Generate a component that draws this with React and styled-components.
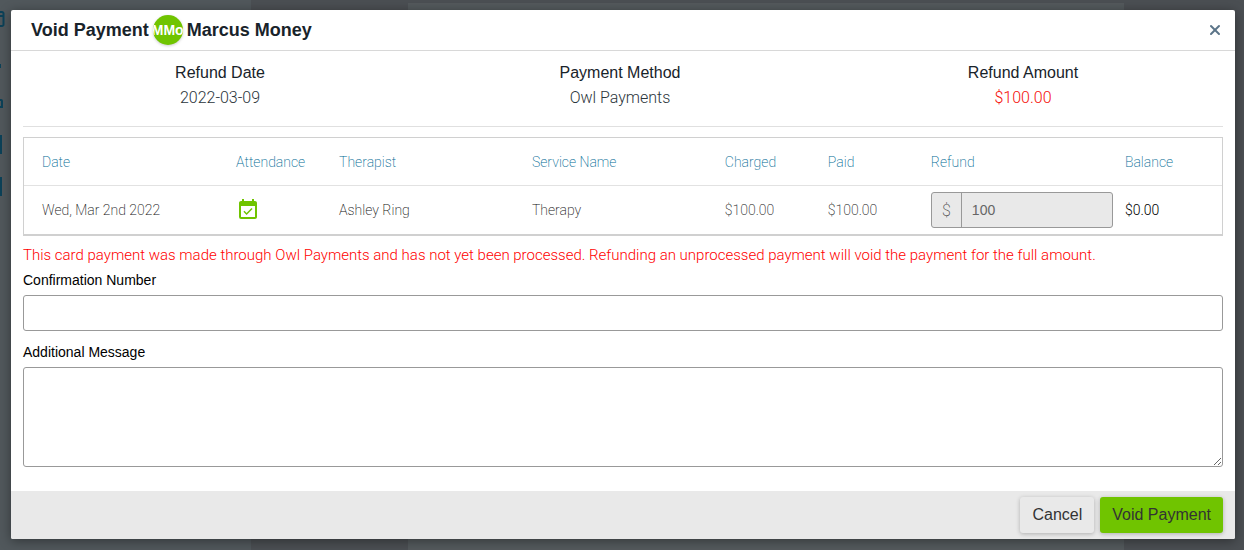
import React from "react";
import styled, { createGlobalStyle } from "styled-components";
import { MdEventAvailable } from "react-icons/md";
import { X } from "lucide-react";

const columns = ["Date", "Attendance", "Therapist", "Service Name", "Charged", "Paid", "Refund", "Balance"];

const sessions = [
	{
		date: "Wed, Mar 2nd 2022",
		therapist: "Ashley Ring",
		service: "Therapy",
		charged: "$100.00",
		paid: "$100.00",
		refund: "100",
		balance: "$0.00",
	},
];

const App = () => {
	return (
		<>
			<GlobalStyle />
			<Page>
				<Sidebar>
					<SidebarIcons viewBox="0 0 6 200" aria-hidden="true">
						<path d="M0 12H2a1.500 1.500 0 0 1 1.500 1.500V24.500a1.500 1.500 0 0 1-1.500 1.500H0M0 16H3.500" />
						<path d="M0 64V68" />
						<path d="M0 100H1a1 1 0 0 1 1 1V107H0" />
						<path d="M0 136H1V153H0Z" />
						<path d="M0 178H1V195H0Z" />
					</SidebarIcons>
				</Sidebar>
				<Main>
					<Sheet />
				</Main>
			</Page>
			<Overlay>
				<Modal role="dialog" aria-labelledby="modal-title">
					<Header>
						<Title id="modal-title">
							Void Payment <Avatar>MMo</Avatar> Marcus Money
						</Title>
						<CloseButton aria-label="Close">
							<X size={16} strokeWidth={3} />
						</CloseButton>
					</Header>
					<Body>
						<Summary>
							<SummaryItem>
								<dt>Refund Date</dt>
								<dd>2022-03-09</dd>
							</SummaryItem>
							<SummaryItem>
								<dt>Payment Method</dt>
								<dd>Owl Payments</dd>
							</SummaryItem>
							<SummaryItem $danger>
								<dt>Refund Amount</dt>
								<dd>$100.00</dd>
							</SummaryItem>
						</Summary>
						<Table>
							<colgroup>
								<Col $width="17.2%" />
								<Col $width="8.6%" />
								<Col $width="16.1%" />
								<Col $width="16.1%" />
								<Col $width="8.6%" />
								<Col $width="8.6%" />
								<Col $width="16.2%" />
								<Col $width="8.6%" />
							</colgroup>
							<thead>
								<tr>
									{columns.map((name) => (
										<th key={name}>{name}</th>
									))}
								</tr>
							</thead>
							<tbody>
								{sessions.map((row) => (
									<tr key={row.date}>
										<td>{row.date}</td>
										<td>
											<Attended />
										</td>
										<td>{row.therapist}</td>
										<td>{row.service}</td>
										<td>{row.charged}</td>
										<td>{row.paid}</td>
										<td>
											<MoneyField>
												<span>$</span>
												<input aria-label="Refund" defaultValue={row.refund} disabled />
											</MoneyField>
										</td>
										<td>
											<Balance>{row.balance}</Balance>
										</td>
									</tr>
								))}
							</tbody>
						</Table>
						<Warning>
							This card payment was made through Owl Payments and has not yet been processed. Refunding an
							unprocessed payment will void the payment for the full amount.
						</Warning>
						<Field>
							<label htmlFor="confirmation">Confirmation Number</label>
							<input id="confirmation" type="text" />
						</Field>
						<Field>
							<label htmlFor="message">Additional Message</label>
							<textarea id="message" />
						</Field>
					</Body>
					<Footer>
						<Button>Cancel</Button>
						<Button $primary>Void Payment</Button>
					</Footer>
				</Modal>
			</Overlay>
		</>
	);
};

export default App;

const GlobalStyle = createGlobalStyle`
	* {
		box-sizing: border-box;
	}
	body {
		margin: 0;
		background: #4b4f53;
		font-family: "Liberation Sans", Arial, sans-serif;
		color: #18232a;
	}
`;

const Page = styled.div`
	display: flex;
	min-height: 100vh;
`;

const Sidebar = styled.aside`
	width: 251px;
	background: #51585c;
`;

const SidebarIcons = styled.svg`
	display: block;
	width: 6px;
	height: 200px;
	fill: none;
	stroke: #0c4158;
	stroke-width: 2px;
`;

const Main = styled.main`
	flex: 1;
	display: flex;
	padding: 3px 120px 0 157px;
	background: #4b4f53;
`;

const Sheet = styled.div`
	flex: 1;
	background: #545a5d;
`;

const Overlay = styled.div`
	position: absolute;
	top: 0;
	left: 0;
	right: 0;
	padding: 10px 9px 11px 11px;
`;

const Modal = styled.div`
	background: #fff;
	border-radius: 2px;
	overflow: hidden;
	box-shadow: 0 2px 12px rgba(0, 0, 0, 0.4);
`;

const Header = styled.header`
	display: flex;
	align-items: center;
	justify-content: space-between;
	height: 41px;
	padding: 0 12px 0 20px;
	border-bottom: 1px solid #d8d8d8;
`;

const Title = styled.h1`
	display: flex;
	align-items: center;
	gap: 4px;
	margin: 0;
	font-size: 18px;
	line-height: 24px;
`;

const Avatar = styled.span`
	display: flex;
	align-items: center;
	justify-content: center;
	width: 30px;
	height: 30px;
	border-radius: 50%;
	overflow: hidden;
	background: #70c400;
	color: #fff;
	font-size: 14px;
	box-shadow: 0 1px 3px rgba(0, 0, 0, 0.2);
`;

const CloseButton = styled.button`
	display: flex;
	padding: 0;
	border: 0;
	background: none;
	color: #5b7488;
`;

const Body = styled.div`
	padding: 0 12px 24px;
`;

const Summary = styled.dl`
	display: grid;
	grid-template-columns: 1fr 1fr 1fr;
	margin: 0 0 10px;
	padding: 9px 0 16px;
	border-bottom: 1px solid #e0e0e0;
	text-align: center;
`;

const SummaryItem = styled.div`
	font-size: 16px;
	line-height: 25px;
	&:not(:last-child) {
		padding-right: 6px;
	}
	dt {
		font-weight: 400;
	}
	dd {
		margin: 0;
		font-family: Roboto, sans-serif;
		font-weight: 300;
		color: ${(props) => (props.$danger ? "#f5100a" : "#2b353b")};
	}
`;

const Table = styled.table`
	width: 100%;
	table-layout: fixed;
	border-collapse: separate;
	border-spacing: 0;
	border: 1px solid #d0d0d0;
	border-bottom-width: 2px;
	font-family: Roboto, sans-serif;
	font-size: 14px;
	text-align: left;
	th,
	td {
		padding: 0 6px;
		font-weight: 200;
	}
	th:first-child,
	td:first-child {
		padding-left: 18px;
	}
	th {
		height: 48px;
		border-bottom: 1px solid #e2e2e2;
		color: #006a94;
	}
	td {
		height: 48px;
		color: #111;
	}
`;

const Col = styled.col`
	width: ${(props) => props.$width};
`;

const Attended = styled(MdEventAvailable)`
	display: block;
	width: 24px;
	height: 24px;
	color: #70c400;
`;

const MoneyField = styled.div`
	display: flex;
	height: 36px;
	border: 1px solid #999;
	border-radius: 3px;
	background: #e9e9e9;
	color: #444;
	span {
		display: flex;
		align-items: center;
		justify-content: center;
		width: 30px;
		border-right: 1px solid #999;
		font-size: 16px;
	}
	input {
		flex: 1;
		min-width: 0;
		padding: 0 10px;
		border: 0;
		background: none;
		color: #666;
		font-family: "Liberation Sans", Arial, sans-serif;
		font-size: 14px;
	}
`;

const Balance = styled.span`
	color: #000;
	font-weight: 300;
`;

const Warning = styled.p`
	margin: 8px 0 5px;
	font-family: Roboto, sans-serif;
	font-size: 15px;
	font-weight: 300;
	line-height: 22px;
	color: #ff0000;
`;

const Field = styled.div`
	display: flex;
	flex-direction: column;
	gap: 6px;
	& + & {
		margin-top: 12px;
	}
	label {
		font-size: 14px;
		line-height: 18px;
		color: #000;
	}
	input,
	textarea {
		width: 100%;
		height: 36px;
		padding: 8px;
		border: 1px solid #999;
		border-radius: 3px;
		background: #fff;
		font: inherit;
	}
	textarea {
		height: 100px;
		resize: vertical;
	}
`;

const Footer = styled.footer`
	display: flex;
	justify-content: flex-end;
	gap: 6px;
	padding: 6px 12px;
	background: #e9e9e9;
`;

const Button = styled.button`
	height: 36px;
	padding: 0 12px;
	border: 0;
	border-radius: 3px;
	background: ${(props) => (props.$primary ? "#70c400" : "#e9e9e9")};
	box-shadow: 0 1px 4px rgba(0, 0, 0, 0.25);
	color: #333;
	font-family: "Liberation Sans", Arial, sans-serif;
	font-size: 16px;
`;
